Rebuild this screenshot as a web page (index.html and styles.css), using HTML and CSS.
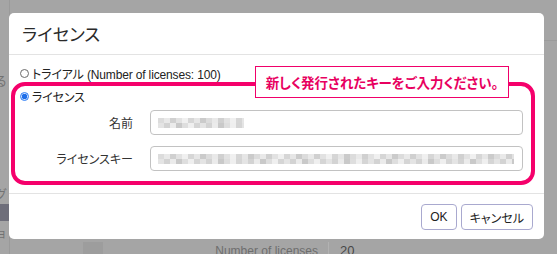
FILE: index.html
```html
<!DOCTYPE html>
<html lang="ja">
<head>
    <meta charset="UTF-8">
    <meta name="viewport" content="width=device-width, initial-scale=1.0">
    <title>ライセンス</title>
    <link rel="stylesheet" href="styles.css">
</head>
<body>
    <div class="page">
        <div class="side">
            <div class="side-item side-ru">る</div>
            <div class="side-item side-gu">グ</div>
            <div class="side-block"></div>
            <div class="side-item side-yo">ョ</div>
        </div>
        <div class="main">
            <div class="main-rule"></div>
            <div class="table-row">
                <div class="cell-band"></div>
                <div class="cell-label">Number of licenses</div>
                <div class="cell-value">20</div>
            </div>
        </div>
    </div>

    <div class="modal">
        <div class="modal-header">
            <h1>ライセンス</h1>
        </div>
        <div class="modal-body">
            <label class="radio-row">
                <input type="radio" name="kind" class="radio">
                <span>トライアル (Number of licenses: 100)</span>
            </label>
            <label class="radio-row">
                <input type="radio" name="kind" class="radio" checked>
                <span>ライセンス</span>
            </label>
            <div class="form-row">
                <label class="form-label">名前</label>
                <div class="field"><span class="mosaic mosaic-name"></span></div>
            </div>
            <div class="form-row">
                <label class="form-label">ライセンスキー</label>
                <div class="field"><span class="mosaic mosaic-key"></span></div>
            </div>
        </div>
        <div class="modal-footer">
            <button class="btn">OK</button>
            <button class="btn">キャンセル</button>
        </div>

        <div class="highlight"></div>
        <div class="note">新しく発行されたキーをご入力ください。</div>
    </div>
</body>
</html>
```

FILE: styles.css
```css
body {
    margin: 0;
    width: 557px;
    height: 254px;
    overflow: hidden;
    background-color: #a5a5a5;
    font-family: "Liberation Sans", "Noto Sans CJK JP", sans-serif;
    color: #222;
    position: relative;
}
.page {
    display: flex;
    height: 254px;
}
.side {
    width: 9px;
    overflow: hidden;
    border-right: 1px solid #9a9a9a;
}
.side-item {
    font-size: 12px;
    color: #727272;
    line-height: 14px;
    margin-left: -5px;
}
.side-ru {
    margin-top: 75px;
}
.side-gu {
    margin-top: 99px;
}
.side-block {
    margin-top: 2px;
    height: 17px;
    width: 9px;
    background: #6e6e7a;
}
.side-yo {
    margin-top: 6px;
}
.main {
    flex: 1;
    display: flex;
    flex-direction: column;
}
.main-rule {
    margin-top: 40px;
    height: 1px;
    background: #9b9b9b;
}
.table-row {
    margin-top: auto;
    height: 14px;
    display: flex;
    align-items: flex-start;
    margin-bottom: -2px;
}
.cell-band {
    width: 20px;
    height: 14px;
    margin-left: 73px;
    background: #9d9d9d;
}
.cell-label {
    width: 215px;
    text-align: right;
    font-size: 12px;
    color: #6e6e6e;
    padding-right: 10px;
    border-right: 1px solid #b2b2b2;
    line-height: 18px;
    height: 14px;
}
.cell-value {
    padding-left: 11px;
    font-size: 13px;
    color: #484848;
    line-height: 18px;
}

.modal {
    position: absolute;
    left: 9px;
    top: 13px;
    width: 535px;
    height: 226px;
    background: #fff;
    border-radius: 5px;
    display: flex;
    flex-direction: column;
}
.modal-header {
    height: 41px;
    border-bottom: 1px solid #e3e3e3;
    display: flex;
    align-items: center;
    padding-left: 13px;
}
.modal-header h1 {
    margin: 0;
    font-size: 17.5px;
    font-weight: normal;
    color: #2a2a2a;
    font-feature-settings: "palt";
}
.modal-body {
    padding: 9px 21px 21px 11px;
    font-size: 12px;
    font-feature-settings: "palt";
}
.radio-row {
    display: flex;
    align-items: center;
    height: 18px;
    margin-bottom: 5px;
    gap: 3px;
    letter-spacing: -0.15px;
}
.radio {
    appearance: none;
    margin: 0;
    width: 9px;
    height: 9px;
    border: 1px solid #6b6b6b;
    border-radius: 50%;
    background: #fff;
}
.radio:checked {
    border-color: #2f7ff5;
    background: radial-gradient(circle, #1f6fe8 0 2.5px, #cfe0fb 3px);
}
.form-row {
    display: grid;
    grid-template-columns: 113px 1fr;
    column-gap: 17px;
    align-items: center;
    margin-top: 4px;
    margin-bottom: 11px;
}
.form-row + .form-row {
    margin-top: 0;
    margin-bottom: 0;
}
.form-label {
    text-align: right;
    color: #333;
}
.field {
    height: 23px;
    border: 1px solid #c2c2c2;
    border-radius: 4px;
    display: flex;
    align-items: center;
    padding-left: 7px;
}
.mosaic {
    height: 10px;
    background:
        repeating-linear-gradient(90deg, #dcdcdc 0 6px, #e9e9e9 6px 12px, #d0d0d0 12px 18px, #e2e2e2 18px 24px, #f0f0f0 24px 30px, #d6d6d6 30px 36px, #e6e6e6 36px 42px, #cbcbcb 42px 48px) 0 0 / 100% 5px no-repeat,
        repeating-linear-gradient(90deg, #e4e4e4 0 6px, #d3d3d3 6px 12px, #ebebeb 12px 18px, #c9c9c9 18px 24px, #dedede 24px 30px, #efefef 30px 36px, #d5d5d5 36px 42px) 0 5px / 100% 5px no-repeat;
}
.mosaic-name {
    width: 86px;
}
.mosaic-key {
    width: 356px;
}
.modal-footer {
    margin-top: auto;
    border-top: 1px solid #e3e3e3;
    height: 46px;
    display: flex;
    justify-content: flex-end;
    align-items: flex-start;
    padding: 10px 11px 0 0;
    box-sizing: border-box;
    gap: 4px;
}
.btn {
    height: 26px;
    border: 1px solid #a9a9cf;
    border-radius: 4px;
    background: #fff;
    font-family: "Liberation Sans", "Noto Sans CJK JP", sans-serif;
    font-size: 12px;
    color: #222;
    padding: 0 8px;
    font-feature-settings: "palt";
}

.highlight {
    position: absolute;
    left: 2px;
    top: 69px;
    width: 516px;
    height: 95px;
    border: 4px solid #f5006b;
    border-radius: 14px;
}
.note {
    position: absolute;
    left: 246px;
    top: 53px;
    width: 252px;
    height: 30px;
    border: 1px solid #f0006a;
    background: #fff;
    color: #e8005f;
    font-size: 13.5px;
    font-weight: bold;
    display: flex;
    align-items: center;
    justify-content: center;
    font-feature-settings: "palt";
}
```
